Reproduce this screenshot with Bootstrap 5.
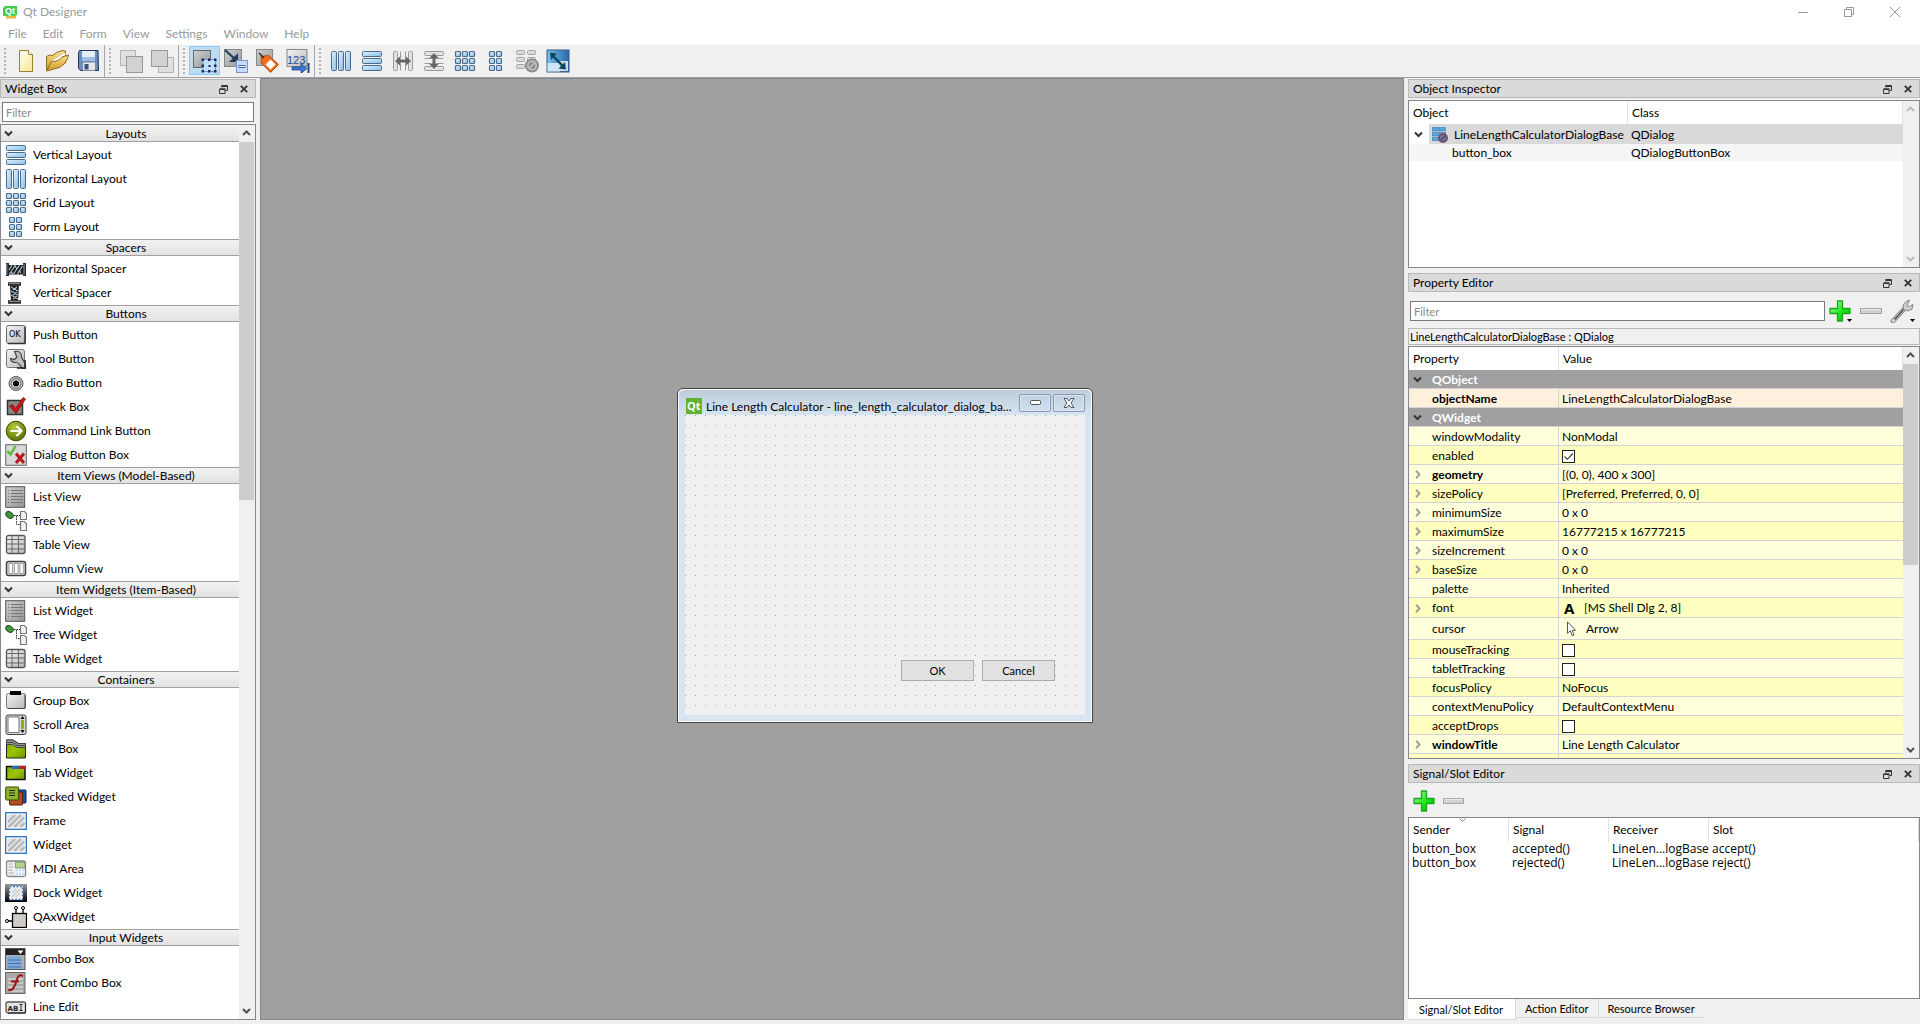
<!DOCTYPE html>
<html lang="en">
<head>
<meta charset="utf-8">
<meta name="viewport" content="width=device-width, initial-scale=1">
<title>Qt Designer</title>
<link href="https://cdn.jsdelivr.net/npm/bootstrap@5.3.0/dist/css/bootstrap.min.css" rel="stylesheet">
<style>
  :root { --ui: Lato, "Open Sans", sans-serif; --frame: #828790; --face: #f0f0f0; }
  body { font-family: var(--ui); font-size: 12px; line-height: 16px; color: #000; background: var(--face); }
  button, input { font: inherit; color: inherit; }
  button { background: none; border: 0; padding: 0; }
  svg { display: block; flex: none; }

  /* window chrome */
  .titlebar { height: 24px; padding: 0 2px 0 3px; gap: 6px; color: #999; }
  .titlebar .caption-btn { width: 46px; height: 20px; }
  .menus { height: 20px; color: #999; }
  .menus a { color: inherit; text-decoration: none; padding: 0 8px; line-height: 20px; }
  .toolrow { height: 34px; border-top: 1px solid #fafafa; border-bottom: 1px solid #a0a0a0; background: var(--face); }
  .toolgroup { padding: 1px 1px 2px 4px; border-right: 1px solid #a6a6a6; }
  .toolgroup:last-child { border-right: 0; }
  .grip { width: 3px; margin: 2px 3px 1px 0; background: radial-gradient(circle at 1px 1px, #b4b4b4 1px, transparent 1px) 0 0 / 3px 4px; }
  .tool { width: 31px; height: 29px; }
  .tool.active { background: #bcdcf4; border: 1px solid #90c8f6; }

  /* docks */
  .dock { padding-top: 1px; }
  .dock-left { width: 256px; }
  .dock-right { width: 512px; }
  .dock-title { height: 19px; background: #dadada; border: 1px solid #b8b8b8; padding: 1px 7px 0 4px; flex: none; }
  .dock-title h2 { font-size: 12px; line-height: 16px; margin: 0; font-weight: 400; }
  .view { background: #fff; border: 1px solid var(--frame); }
  .filter { height: 20px; border: 1px solid #7a7a7a; border-radius: 0; padding: 1px 3px 0; background: #fff; min-width: 0; font-size: 11px; }
  .filter::placeholder { color: #8a8a8a; opacity: 1; }
  .searchrow { padding: 4px 2px 2px; }

  /* scrollbars */
  .sbar { width: 16px; flex: none; background: var(--face); padding-right: 1px; color: #505050; }
  .sbar.idle { color: #bdbdbd; }
  .sbar .arrow { height: 17px; }
  .sbar .thumb { background: #cdcdcd; }

  /* widget box */
  .cat { height: 17px; margin-bottom: 1px; width: 100%; padding-left: 3px; background: linear-gradient(#f2f2f2, #e2e2e2);
    border-top: 1px solid #a0a0a0; border-bottom: 1px solid #a0a0a0; }
  .cat.first { border-top-color: #f2f2f2; }
  .cat span { flex: 1; text-align: center; line-height: 15px; }
  .item { height: 24px; width: 100%; padding-left: 4px; gap: 6px; text-align: left; }

  /* tables */
  table.tree { table-layout: fixed; width: 100%; border-collapse: separate; border-spacing: 0; }
  .tree th { font-weight: 400; height: 23px; padding: 0 4px; border-right: 1px solid #e2e2e2; line-height: 16px; }
  .tree td { padding: 0 3px; white-space: nowrap; line-height: 16px; }
  .obj tr.sel td { height: 20px; padding-top: 1px; background: #d9d9d9; }
  .obj tr.sel td:first-child { background: linear-gradient(90deg, #fff 20px, #d9d9d9 20px); }
  .obj tr.sub td { height: 17px; background: #f5f5f5; }
  .obj tr.sub td:first-child { padding-left: 43px; }
  .obj .obj-down { margin-left: 2px; }
  .obj .obj-icon { margin: 0 6px 0 9px; }
  .prop td { height: 19px; padding-top: 1px; border-bottom: 1px solid #d4d4d4; }
  .prop td:first-child { padding-left: 4px; border-right: 1px solid #d4d4d4; }
  .prop tr.light td { background: #ffffdc; }
  .prop tr.dark td { background: #ffffbf; }
  .prop tr.named td { background: #fff0de; }
  .prop tr.group td { background: #a0a0a0; color: #fff; font-weight: 700; border-right: 0; }
  .prop tr.tall td { height: 20px; }
  .prop tr.taller td { height: 22px; }
  .prop .glyph-a { width: 13px; margin: 0 7px 0 2px; font: 700 15px/16px "Noto Sans", sans-serif; }
  .prop .pointer { margin: 0 10px 0 5px; }
  .twisty { width: 9px; margin-right: 10px; flex: none; }
  .prop .form-check-input { width: 13px; height: 13px; margin: 1px 0 0; border: 1px solid #222; border-radius: 0; background-color: #fff; float: none; }
  .prop .form-check-input:checked { background: #fff url("data:image/svg+xml,%3Csvg xmlns='http://www.w3.org/2000/svg' viewBox='0 0 11 11'%3E%3Cpath d='M1.5 5.5l2.8 2.8L9.8 2.5' fill='none' stroke='%23333' stroke-width='1.1'/%3E%3C/svg%3E") center / 11px; }
  .path-label { height: 17px; border: 1px solid #b9b9b9; padding: 0 1px; line-height: 16px; font-size: 11px; }
  .objects { height: 168px; margin: 2px 0 5px; }
  .properties { margin: 1px 0 5px; flex-basis: 0; }
  .signals { height: 182px; font-family: "Open Sans", "Noto Sans", sans-serif; }
  .signals th { font-family: var(--ui); height: 24px; }
  .signals td { height: 14px; line-height: 14px; }
  .sigbar { height: 34px; padding: 2px 5px 0; gap: 8px; }
  .filterbar { height: 36px; padding: 2px 5px 0 2px; }
  .minus-btn { margin: 0 8px; }
  .drop { margin-left: -4px; }

  .tab { height: 19px; border-right: 1px solid #d9d9d9; border-bottom: 1px solid #d9d9d9; padding: 0 9px; line-height: 20px; font-size: 11px; }
  .tab.active { height: 21px; background: #fff; line-height: 21px; padding: 0 12px 0 11px; }

  /* form canvas */
  .mdi { background: #a0a0a0; border: 1px solid var(--frame); position: relative; min-width: 0; }
  .formwin { position: absolute; left: 416px; top: 309px; border: 1px solid #444; border-radius: 6px 6px 0 0; background: #fff; padding: 1px; }
  .formframe { background: linear-gradient(#becbd9, #d7e4f2 25px); border-radius: 5px 5px 0 0; padding: 0 6px 6px; }
  .formtitle { height: 25px; gap: 4px; padding-left: 1px; }
  .formtitle .qt-badge { margin-top: 8px; }
  .formtitle .title-text { flex: 1; white-space: nowrap; padding-top: 9px; line-height: 16px; }
  .formtitle .wbtns { gap: 2px; }
  .formtitle .wbtn { width: 32px; height: 18px; margin-top: 4px; border: 1px solid #8a98b4; border-radius: 2px; background: linear-gradient(#c3d0df, #d2dfed); box-shadow: inset 0 0 0 1px #dbe5f0; }
  .canvas { width: 400px; height: 300px; padding: 0 30px 34px; gap: 8px;
    background: conic-gradient(from 0deg at 1px 1px, transparent 270deg, #a0a0a0 0) 0 0 / 10px 10px, var(--face); }
  .pbtn { width: 73px; height: 21px; background: #e1e1e1; border: 1px solid #adadad; line-height: 19px; font-size: 11px; }
</style>
<script src="https://cdn.jsdelivr.net/npm/bootstrap@5.3.0/dist/js/bootstrap.bundle.min.js"></script>
</head>
<body class="vh-100 d-flex flex-column overflow-hidden">

<svg width="0" height="0" class="position-absolute" aria-hidden="true">
  <defs>
    <linearGradient id="gBlue" x1="0" y1="0" x2="1" y2="1"><stop offset="0" stop-color="#e2f4ff"/><stop offset="1" stop-color="#86bde6"/></linearGradient>
    <linearGradient id="gGray" x1="0" y1="0" x2="1" y2="1"><stop offset="0" stop-color="#f4f4f4"/><stop offset="1" stop-color="#b8b8b8"/></linearGradient>
    <linearGradient id="gMid" x1="0" y1="0" x2="1" y2="1"><stop offset="0" stop-color="#d0d0d0"/><stop offset="1" stop-color="#969696"/></linearGradient>
    <linearGradient id="gPage" x1="0" y1="0" x2="1" y2="1"><stop offset="0" stop-color="#fffef0"/><stop offset="1" stop-color="#f7e69a"/></linearGradient>
    <linearGradient id="gFold" x1="0" y1="0" x2="0" y2="1"><stop offset="0" stop-color="#fbe08a"/><stop offset="1" stop-color="#d09a28"/></linearGradient>
    <linearGradient id="gPlus" x1="0" y1="0" x2="1" y2="1"><stop offset="0" stop-color="#b8ffb0"/><stop offset=".55" stop-color="#18e818"/><stop offset="1" stop-color="#00b400"/></linearGradient>
    <linearGradient id="gDock" x1="0" y1="0" x2="0" y2="1"><stop offset="0" stop-color="#999"/><stop offset="1" stop-color="#000"/></linearGradient>
    <radialGradient id="gOlive" cx=".4" cy=".3" r=".7"><stop offset="0" stop-color="#b4cc38"/><stop offset="1" stop-color="#5c7400"/></radialGradient>
    <linearGradient id="gLime" x1="0" y1="0" x2="1" y2="1"><stop offset="0" stop-color="#79a800"/><stop offset=".5" stop-color="#9cc400"/><stop offset="1" stop-color="#6c9400"/></linearGradient>
    <linearGradient id="gFit" x1="0" y1="0" x2="1" y2="0"><stop offset="0" stop-color="#7cc0ec"/><stop offset="1" stop-color="#2468a8"/></linearGradient>
  </defs>
  <symbol id="down" viewBox="0 0 9 9"><path d="M1 2.500l3.500 3.500L8 2.500" fill="none" stroke="#333" stroke-width="2"/></symbol>
  <symbol id="right" viewBox="0 0 9 9"><path d="M3 .8l3.600 3.700L3 8.200" fill="none" stroke="#a2a29a" stroke-width="2"/></symbol>
  <symbol id="s-up" viewBox="0 0 9 9"><path d="M1 6l3.500-3.500L8 6" fill="none" stroke="currentColor" stroke-width="2"/></symbol>
  <symbol id="s-down" viewBox="0 0 9 9"><path d="M1 3l3.500 3.500L8 3" fill="none" stroke="currentColor" stroke-width="2"/></symbol>
  <symbol id="float" viewBox="0 0 9 9"><path d="M3 2.500V.8h5.500V5.500H6.500" fill="none" stroke="#333"/><path d="M2.500 1h6" stroke="#333" stroke-width="2"/><path d="M.5 4.500h5.500v4H.5z" fill="none" stroke="#333"/><path d="M.5 4h6" stroke="#333" stroke-width="1.500"/></symbol>
  <symbol id="close" viewBox="0 0 8 8"><path d="M.8.8l6.400 6.400M7.200.8L.8 7.200" stroke="#333" stroke-width="1.800"/></symbol>
  <symbol id="plus" viewBox="0 0 22 22"><path d="M8.500 1h5v7.500H21v5h-7.500V21h-5v-7.500H1v-5h7.500z" fill="url(#gPlus)" stroke="#1da51d" stroke-width="1.300" stroke-linejoin="round"/></symbol>
  <symbol id="minus" viewBox="0 0 22 6"><rect x=".5" y=".5" width="21" height="5" fill="#d2d2d2" stroke="#a2a2a2"/><path d="M1.500 1.500h19" stroke="#eee"/></symbol>
  <symbol id="wrench" viewBox="0 0 24 24"><path d="M3 22L15 9" stroke="#777" stroke-width="4.600" stroke-linecap="round"/><path d="M3 22L15 9" stroke="#d8d8d8" stroke-width="3" stroke-linecap="round"/><path d="M4.500 20.500L14 10" stroke="#444" stroke-width="1.400"/><path d="M19.500 1l-3.500 1.500L13 6l.5 4.500 4.500 1.500 4-2 1-4.500-3.500 2-2.500-1z" fill="#ccc" stroke="#8a8a8a"/></symbol>

  <!-- layouts -->
  <symbol id="vlay" viewBox="0 0 22 22"><g fill="url(#gBlue)" stroke="#4c6a8a"><rect x="1.500" y="1.500" width="19" height="5" rx="1"/><rect x="1.500" y="8.500" width="19" height="5" rx="1"/><rect x="1.500" y="15.500" width="19" height="5" rx="1"/></g></symbol>
  <symbol id="hlay" viewBox="0 0 22 22"><g fill="url(#gBlue)" stroke="#4c6a8a"><rect x="1.500" y="1.500" width="5" height="19" rx="1"/><rect x="8.500" y="1.500" width="5" height="19" rx="1"/><rect x="15.500" y="1.500" width="5" height="19" rx="1"/></g></symbol>
  <symbol id="grid" viewBox="0 0 22 22"><g fill="url(#gBlue)" stroke="#4c6a8a" stroke-width="1.200"><rect x="1.500" y="1.500" width="5" height="5" rx="1"/><rect x="8.500" y="1.500" width="5" height="5" rx="1"/><rect x="15.500" y="1.500" width="5" height="5" rx="1"/><rect x="1.500" y="8.500" width="5" height="5" rx="1"/><rect x="8.500" y="8.500" width="5" height="5" rx="1"/><rect x="15.500" y="8.500" width="5" height="5" rx="1"/><rect x="1.500" y="15.500" width="5" height="5" rx="1"/><rect x="8.500" y="15.500" width="5" height="5" rx="1"/><rect x="15.500" y="15.500" width="5" height="5" rx="1"/></g></symbol>
  <symbol id="form" viewBox="0 0 22 22"><g fill="url(#gBlue)" stroke="#4c6a8a" stroke-width="1.200"><rect x="4.500" y="1.500" width="5" height="5" rx="1"/><rect x="11.500" y="1.500" width="5" height="5" rx="1"/><rect x="4.500" y="8.500" width="5" height="5" rx="1"/><rect x="11.500" y="8.500" width="5" height="5" rx="1"/><rect x="4.500" y="15.500" width="5" height="5" rx="1"/><rect x="11.500" y="15.500" width="5" height="5" rx="1"/></g></symbol>
  <symbol id="hsplit" viewBox="0 0 22 22"><g fill="#e2e2e2" stroke="#9a9a9a"><rect x="1.500" y="1.500" width="4" height="19" rx="1"/><rect x="16.500" y="1.500" width="4" height="19" rx="1"/><path d="M8.500 1.500v6M13.500 1.500v6M8.500 14.500v6M13.500 14.500v6"/></g><path d="M3 11l5.500-5v3.500h5V6l5.500 5-5.500 5v-3.500h-5V16z" fill="#666"/></symbol>
  <symbol id="vsplit" viewBox="0 0 22 22"><g fill="#e2e2e2" stroke="#9a9a9a"><rect x="1.500" y="1.500" width="19" height="4" rx="1"/><rect x="1.500" y="16.500" width="19" height="4" rx="1"/><path d="M1.500 8.500h6M1.500 13.500h6M14.500 8.500h6M14.500 13.500h6"/></g><path d="M11 3l5 5.500h-3.500v5H16L11 19l-5-5.500h3.500v-5H6z" fill="#666"/></symbol>
  <symbol id="break" viewBox="0 0 24 24"><g fill="#dadada" stroke="#a4a4a4"><rect x="1.500" y="1.500" width="8" height="4" rx="1"/><rect x="12.500" y="1.500" width="8" height="4" rx="1"/><rect x="1.500" y="8.500" width="8" height="4" rx="1"/><rect x="12.500" y="8.500" width="8" height="4" rx="1"/><rect x="1.500" y="15.500" width="8" height="4" rx="1"/></g><circle cx="17" cy="16.500" r="7" fill="#8c8c8c"/><circle cx="17" cy="16.500" r="4.200" fill="none" stroke="#c4c4c4" stroke-width="1.500"/><path d="M14 19.500l6-6" stroke="#c4c4c4" stroke-width="1.500"/></symbol>
  <symbol id="breakc" viewBox="0 0 16 16"><g fill="#58a6de" stroke="#3a7aae" stroke-width=".6"><rect x="0" y=".5" width="6.500" height="3.500"/><rect x="7.500" y=".5" width="6" height="3.500"/><rect x="0" y="5.500" width="6.500" height="3.500"/><rect x="7.500" y="5.500" width="6" height="3.500"/><rect x="0" y="10.500" width="6.500" height="3"/></g><circle cx="11" cy="11" r="5" fill="#74506a"/><circle cx="11" cy="11" r="3" fill="#5c7ca8"/><path d="M8.500 13.500l5-5" stroke="#74405a" stroke-width="1.500"/></symbol>
  <symbol id="adjust" viewBox="0 0 24 24"><rect x="1" y="1" width="22" height="22" fill="url(#gFit)" stroke="#2c5c8c"/><path d="M14 12h8v10h-8z" fill="#d8d8d8"/><path d="M1.500 14H14v8.500H1.500z" fill="#d0e6f4"/><path d="M4 3.500l7 1L8.700 7l8.100 8.300 2.200-2.300 1 7.500-7.500-1 2.500-2.500-8-8.300L5 11z" fill="#0c4a64"/></symbol>

  <!-- toolbar -->
  <symbol id="new" viewBox="0 0 24 24"><path d="M5.500 1.500h9l4 4v17h-13z" fill="url(#gPage)" stroke="#97812c"/><path d="M14.500 1.500v4h4" fill="#fff" stroke="#97812c"/></symbol>
  <symbol id="open" viewBox="0 0 24 24"><path d="M1.500 21V7.500l3-1.500 3 .5 4-3 6-2 3 .5V14z" fill="url(#gFold)" stroke="#8d6a1c" stroke-linejoin="round"/><path d="M6 12L19 4l2 1-6 10z" fill="#fff" stroke="#bbb" stroke-width=".6"/><path d="M1.500 22l5-9.500c4 0 8-1 10.500-4.500l6.500-2c-1.500 6-4 9.500-9 12.500z" fill="url(#gFold)" stroke="#8d6a1c" stroke-linejoin="round"/></symbol>
  <symbol id="save" viewBox="0 0 24 24"><path d="M3.500 1.500h18.500l.5 20H4.500l-2-2v-16z" fill="#6a8cb8" stroke="#1f3460" stroke-linejoin="round"/><rect x="6" y="2" width="13" height="9.500" fill="#e2eefa"/><path d="M6 9.500h13" stroke="#9ac0e8" stroke-width="3"/><rect x="7" y="13.500" width="12" height="8" fill="#e6e6e6"/><rect x="8.500" y="15" width="4" height="5.500" fill="#36537e"/></symbol>
  <symbol id="front" viewBox="0 0 24 24"><rect x="1.500" y="1.500" width="15" height="15" fill="#e0e0e0" stroke="#b4b4b4"/><rect x="7.500" y="7.500" width="16" height="16" fill="#d2d2d2" stroke="#989898"/></symbol>
  <symbol id="back" viewBox="0 0 24 24"><rect x="8.500" y="8.500" width="15" height="15" fill="#e0e0e0" stroke="#b4b4b4"/><rect x="1.500" y="1.500" width="16" height="16" fill="#d2d2d2" stroke="#989898"/></symbol>
  <symbol id="ewid" viewBox="0 0 24 24"><rect x=".5" y="1.500" width="17" height="17" fill="url(#gMid)" stroke="#666"/><rect x="10" y="10.500" width="12.500" height="12" fill="#c4deff" stroke="#6c94d8"/><path d="M8.500 9.500h2.500v2.500H8.500zM15 9.500h2.500v2.500H15zM21 9.500h2.500v2.500H21zM8.500 15.500h2.500v2.500H8.500zM21 15.500h2.500v2.500H21zM8.500 21h2.500v2.500H8.500zM15 21h2.500v2.500H15zM21 21h2.500v2.500H21zM15.500 16h2v2h-2z" fill="#1c2c54"/></symbol>
  <symbol id="esig" viewBox="0 0 24 24"><rect x=".5" y=".5" width="17" height="17" fill="url(#gMid)" stroke="#888"/><path d="M1 1l11 10" stroke="#20405c" stroke-width="2.200"/><path d="M14 4v9H5z" fill="#20405c"/><rect x="12.500" y="11.500" width="11" height="12" fill="#c6dcff" stroke="#7c94c8"/><path d="M14.500 17.500h7" stroke="#3c64ac" stroke-width="3"/><path d="M15 17.500h6" stroke="#fff"/></symbol>
  <symbol id="ebud" viewBox="0 0 24 24"><rect x="1.500" y=".5" width="16" height="16" fill="url(#gMid)" stroke="#888"/><path d="M6 7.500l7.500-1L23.500 15.500 15.500 23.500 6.500 14z" fill="#f46c1c" stroke="#b0480c"/><path d="M15.500 10.500l5 5-5 5-5-5z" fill="#fff"/><path d="M4 4l5 5" stroke="#222" stroke-width="1.200"/></symbol>

  <!-- widgets -->
  <symbol id="hspace" viewBox="0 0 22 22"><path d="M2.500 5v13M19.500 5v13" stroke="#2a2a2a" stroke-width="3"/><path d="M1.800 6v11M19 6v11" stroke="#999"/><path d="M4 7h14v9.500H4z" fill="#1c1c1c"/><path d="M4 12l3-5M4.500 16l6-9M8.500 16l6-9M12.500 16l5-8M6 14l2 2M10 8l2 3M14 12l2 3" stroke="#a8c4d8" stroke-width="1.200"/></symbol>
  <symbol id="vspace" viewBox="0 0 22 22"><path d="M3 2h13M3 20h13" stroke="#2a2a2a" stroke-width="3.500"/><path d="M4 1.500h11M4 19.500h11" stroke="#888"/><path d="M5 3.500h9l-1 15H6z" fill="#1c1c1c"/><path d="M6 5l7 4M6 9l7 4M6 13l7 4M12 5l-4 3M12 10l-4 3M12 14l-4 3" stroke="#a8c4d8" stroke-width="1.100"/></symbol>
  <symbol id="toolb" viewBox="0 0 22 22"><rect x="1.500" y="1.500" width="18" height="18" rx="2" fill="url(#gGray)" stroke="#777"/><path d="M9.500 3.500c4-1 7 1 7 5 0 1.500 2 4 4 8v4h-3c-2-3-4-6-6-6-3 0-6-1-6-4l4 1 2.500-2.500z" fill="#c0c0c0" stroke="#444" stroke-width="1.200"/><path d="M20 12v8h-8" fill="none" stroke="#222" stroke-width="1.500"/></symbol>
  <symbol id="radio" viewBox="0 0 22 22"><circle cx="11" cy="11.500" r="7" fill="#bbb" stroke="#555"/><circle cx="11" cy="11.500" r="4.800" fill="#ddd" stroke="#666"/><circle cx="11" cy="11.500" r="3" fill="#000"/></symbol>
  <symbol id="check" viewBox="0 0 22 22"><rect x="2.500" y="4.500" width="15" height="14" fill="#888" stroke="#333" stroke-width="1.500"/><path d="M4.500 10l3-1.500 3 4L18 1.500l2.500 1.500L11 17.500z" fill="#d01414" stroke="#780808" stroke-width=".7"/></symbol>
  <symbol id="link" viewBox="0 0 22 22"><circle cx="11" cy="11" r="9.800" fill="url(#gOlive)" stroke="#3c4c00"/><path d="M5.500 11h11M11.500 6l5 5-5 5" fill="none" stroke="#fff" stroke-width="2.200"/></symbol>
  <symbol id="dbb" viewBox="0 0 22 22"><rect x=".7" y=".7" width="20.600" height="20.600" fill="#d8d8d8" stroke="#666"/><path d="M2.500 7l3 3.500L10.500 2" fill="none" stroke="#58b838" stroke-width="2.200"/><path d="M11 9.500l8 9.500M19 9.500l-8 9.500" stroke="#b81818" stroke-width="3"/></symbol>
  <symbol id="list" viewBox="0 0 22 22"><rect x=".7" y=".7" width="19" height="20.600" fill="url(#gMid)" stroke="#555"/><path d="M3 4.500h1M3 7.500h1M3 10.500h1M3 13.500h1M3 16.500h1M6 4.500h12M6 7.500h12M6 10.500h12M6 13.500h12M6 16.500h12" stroke="#777"/></symbol>
  <symbol id="treei" viewBox="0 0 22 22"><ellipse cx="4.500" cy="5" rx="4" ry="2.800" transform="rotate(35 4.500 5)" fill="#3c9c3c" stroke="#174c17"/><path d="M9 5.500h6M11.500 6v8.500H15" fill="none" stroke="#222" stroke-dasharray="1.500 1"/><path d="M15.500 1.500h4l2 2v6h-6zM15.500 11.500h4l2 2v7h-6z" fill="#f0f0f0" stroke="#777" stroke-width="1.200"/></symbol>
  <symbol id="tablei" viewBox="0 0 22 22"><rect x="1.500" y="1.500" width="18.500" height="18" rx="2" fill="url(#gGray)" stroke="#555" stroke-width="1.300"/><path d="M7 2v17M13.500 2v17M2 5.500h18M2 10h18M2 15h18" stroke="#666"/></symbol>
  <symbol id="columni" viewBox="0 0 22 22"><rect x="1.500" y="3.500" width="19" height="14" rx="2" fill="#d8d8d8" stroke="#444" stroke-width="1.500"/><path d="M4 5.500h3.500v10H4zM9.500 5.500H13v10H9.500zM15 5.500h3.500v10H15z" fill="#fff" stroke="#888" stroke-width=".7"/></symbol>
  <symbol id="group" viewBox="0 0 22 22"><rect x="1.500" y="3.500" width="19" height="15" rx="2" fill="url(#gGray)" stroke="#777"/><path d="M20 5v13.500H3" fill="none" stroke="#444"/><path d="M5 1h11v4H5z" fill="#000"/></symbol>
  <symbol id="scroll" viewBox="0 0 22 22"><rect x="1" y="1" width="20" height="19.500" rx="2" fill="#d8d8d8" stroke="#444"/><rect x="3" y="3" width="11" height="15.500" fill="#fff" stroke="#777"/><path d="M16 6h3v9h-3z" fill="#88b418"/><path d="M15.500 5l2-3 2 3zM15.500 16l2 3 2-3z" fill="#000"/></symbol>
  <symbol id="toolbox" viewBox="0 0 22 22"><path d="M1.500 2v18h19V5.500h-7L8 2z" fill="url(#gLime)" stroke="#222"/><path d="M1.500 2H8l5 3.500h7.500v4H12L7.500 6.500h-6z" fill="#999" stroke="#444"/><path d="M1.500 4.500H8l4.500 3h8" fill="none" stroke="#444"/></symbol>
  <symbol id="tabw" viewBox="0 0 22 22"><rect x="1.500" y="4.500" width="18.500" height="13" fill="url(#gLime)" stroke="#111" stroke-width="1.500"/><path d="M7 4h7v3H7z" fill="#2c68b4"/><path d="M14 4h6v3h-6z" fill="#c82020"/></symbol>
  <symbol id="stacked" viewBox="0 0 22 22"><rect x="8" y="4" width="13" height="13" rx="1" fill="#1c50b0" stroke="#0c2450"/><rect x="4.500" y="6" width="13" height="13" rx="1" fill="#b84c1c" stroke="#50200c"/><rect x=".7" y="1" width="13" height="13" rx="1" fill="#90b428" stroke="#334400"/><path d="M4 4.500h6M4 7h6M4 9.500h6" stroke="#222"/></symbol>
  <symbol id="frame" viewBox="0 0 22 22"><rect x=".7" y="2.700" width="20.600" height="16.600" fill="#fff" stroke="#2c70c0" stroke-width="1.300"/><rect x="2.500" y="4.500" width="17" height="13" fill="#e4e4e4"/><path d="M3 12l7-7M3.500 17L16 4.800M9.500 17l9.500-9.500M15.500 17l4-4" stroke="#b8b8b8" stroke-width="2.400"/></symbol>
  <symbol id="mdii" viewBox="0 0 22 22"><rect x="1.500" y="3" width="19" height="15.500" rx="2" fill="#eee" stroke="#888" stroke-width="1.300"/><path d="M10.500 4H20v6h-9.500z" fill="#b0d488" stroke="#777" stroke-width=".7"/><path d="M11 11h9v7h-9z" fill="#c4dcf4"/><path d="M3.500 6h4M3.500 9h5M3.500 12h4M3.500 15h5" stroke="#b0b0b0"/><path d="M13.500 11v7M16.500 11v7M11 14h9" stroke="#fff"/></symbol>
  <symbol id="docki" viewBox="0 0 22 22"><rect y="2" width="22" height="18" fill="url(#gDock)"/><rect x="4.500" y="4.500" width="13" height="13" fill="#eee" stroke="#fff"/><rect x="4.500" y="4.500" width="13" height="13" fill="none" stroke="#3c78c4" stroke-width="1.300" stroke-dasharray="2 1.500"/><path d="M7 15l8-8M7 11l4-4M11 15l4-4" stroke="#ccc" stroke-width="1.500"/></symbol>
  <symbol id="qax" viewBox="0 0 22 22"><rect x="7.500" y="7.500" width="14" height="14" fill="#d0ccc8" stroke="#000" stroke-width="1.300"/><path d="M11 7V3M18 7V3M7 15H3" stroke="#000" stroke-width="1.300"/><circle cx="11" cy="2" r="1.500" fill="#fff" stroke="#000"/><circle cx="18" cy="2" r="1.500" fill="#fff" stroke="#000"/><circle cx="2" cy="15" r="1.500" fill="#fff" stroke="#000"/></symbol>
  <symbol id="combo" viewBox="0 0 22 22"><rect x=".5" y=".5" width="19.500" height="21" fill="#b0b0b0" stroke="#555"/><path d="M1 1h19v6H1z" fill="#222"/><path d="M12.500 2.500h6l-3 3.500z" fill="#fff"/><path d="M2.500 8.500h14v12.500h-14z" fill="#7ca8dc"/><path d="M2.500 12h14M2.500 15.500h14M2.500 19h14" stroke="#4c74a8"/></symbol>
  <symbol id="fcombo" viewBox="0 0 22 22"><rect x=".5" y=".5" width="19.500" height="21" fill="#a8a8a8" stroke="#666"/><path d="M3 7h15M3 11h15M3 15h15M3 19h15" stroke="#c8c8c8" stroke-width="2"/><path d="M18 4c-6-3-6 5-8 9s-3 6-7 5M6 9.500h8" fill="none" stroke="#a01414" stroke-width="2"/></symbol>
</svg>

<header class="bg-white flex-shrink-0">
  <div class="titlebar d-flex align-items-center">
    <svg width="14" height="14" viewBox="0 0 14 14"><path d="M2 1h12v9l-2 1H0V3z" fill="#41cd52"/><text x="2" y="9" font-family="Liberation Sans, sans-serif" font-weight="700" font-size="9" fill="#fff">Qt</text><path d="M3 11h10v2.500H3z" fill="#e8b838"/></svg>
    <span>Qt Designer</span>
    <div class="ms-auto d-flex">
      <button class="caption-btn d-flex align-items-center justify-content-center" aria-label="Minimize"><svg width="10" height="10" viewBox="0 0 10 10"><path d="M0 5.500h10" stroke="#999"/></svg></button>
      <button class="caption-btn d-flex align-items-center justify-content-center" aria-label="Restore"><svg width="10" height="10" viewBox="0 0 10 10"><path d="M.5 2.500h7v7h-7zM2.500 2.500v-2h7v7h-2" fill="none" stroke="#999"/></svg></button>
      <button class="caption-btn d-flex align-items-center justify-content-center" aria-label="Close"><svg width="10" height="10" viewBox="0 0 10 10"><path d="M0 0l10 10M10 0L0 10" stroke="#999"/></svg></button>
    </div>
  </div>
  <nav class="menus d-flex" aria-label="Main menu">
    <a href="#">File</a><a href="#">Edit</a><a href="#">Form</a><a href="#">View</a><a href="#">Settings</a><a href="#">Window</a><a href="#">Help</a>
  </nav>
  <div class="toolrow d-flex" role="toolbar" aria-label="Tools">
    <div class="toolgroup d-flex"><i class="grip"></i>
      <button class="tool d-flex align-items-center justify-content-center" aria-label="New"><svg width="24" height="24"><use href="#new"/></svg></button>
      <button class="tool d-flex align-items-center justify-content-center" aria-label="Open"><svg width="24" height="24"><use href="#open"/></svg></button>
      <button class="tool d-flex align-items-center justify-content-center" aria-label="Save"><svg width="24" height="24"><use href="#save"/></svg></button>
    </div>
    <div class="toolgroup d-flex"><i class="grip"></i>
      <button class="tool d-flex align-items-center justify-content-center" aria-label="Bring to front"><svg width="24" height="24"><use href="#front"/></svg></button>
      <button class="tool d-flex align-items-center justify-content-center" aria-label="Send to back"><svg width="24" height="24"><use href="#back"/></svg></button>
    </div>
    <div class="toolgroup d-flex"><i class="grip"></i>
      <button class="tool active d-flex align-items-center justify-content-center" aria-label="Edit widgets"><svg width="24" height="24"><use href="#ewid"/></svg></button>
      <button class="tool d-flex align-items-center justify-content-center" aria-label="Edit signals"><svg width="24" height="24"><use href="#esig"/></svg></button>
      <button class="tool d-flex align-items-center justify-content-center" aria-label="Edit buddies"><svg width="24" height="24"><use href="#ebud"/></svg></button>
      <button class="tool d-flex align-items-center justify-content-center" aria-label="Edit tab order"><svg width="24" height="24" viewBox="0 0 24 24"><rect x="1" y=".5" width="20" height="17" fill="url(#gGray)" stroke="#888"/><text x="1" y="15" font-family="Liberation Sans, sans-serif" font-size="11" fill="#1c4c98">123</text><path d="M6 18h9v-3.500l6 5-6 5V21H6z" fill="#3c78d0" stroke="#1c4488" stroke-width=".8"/><path d="M22.500 14v10" stroke="#1c4488" stroke-width="2"/></svg></button>
    </div>
    <div class="toolgroup d-flex"><i class="grip"></i>
      <button class="tool d-flex align-items-center justify-content-center" aria-label="Lay out horizontally"><svg width="22" height="22"><use href="#hlay"/></svg></button>
      <button class="tool d-flex align-items-center justify-content-center" aria-label="Lay out vertically"><svg width="22" height="22"><use href="#vlay"/></svg></button>
      <button class="tool d-flex align-items-center justify-content-center" aria-label="Horizontal splitter"><svg width="22" height="22"><use href="#hsplit"/></svg></button>
      <button class="tool d-flex align-items-center justify-content-center" aria-label="Vertical splitter"><svg width="22" height="22"><use href="#vsplit"/></svg></button>
      <button class="tool d-flex align-items-center justify-content-center" aria-label="Grid"><svg width="22" height="22"><use href="#grid"/></svg></button>
      <button class="tool d-flex align-items-center justify-content-center" aria-label="Form layout"><svg width="22" height="22"><use href="#form"/></svg></button>
      <button class="tool d-flex align-items-center justify-content-center" aria-label="Break layout"><svg width="24" height="24"><use href="#break"/></svg></button>
      <button class="tool d-flex align-items-center justify-content-center" aria-label="Adjust size"><svg width="24" height="24"><use href="#adjust"/></svg></button>
    </div>
  </div>
</header>

<main class="d-flex flex-fill gap-1 pb-1 overflow-hidden">

  <section class="dock dock-left d-flex flex-column flex-shrink-0">
    <div class="dock-title d-flex align-items-center"><h2>Widget Box</h2>
      <button class="ms-auto" aria-label="Float"><svg width="9" height="9"><use href="#float"/></svg></button>
      <button class="ms-2 ps-1" aria-label="Close dock"><svg width="8" height="8"><use href="#close"/></svg></button></div>
    <div class="searchrow d-flex"><input class="filter flex-fill" placeholder="Filter" aria-label="Filter widgets"></div>
    <div class="view d-flex flex-fill overflow-hidden">
      <div class="flex-fill overflow-hidden">
        <button class="cat first d-flex align-items-center"><svg width="9" height="9"><use href="#down"/></svg><span>Layouts</span></button>
        <button class="item d-flex align-items-center"><svg width="22" height="22"><use href="#vlay"/></svg>Vertical Layout</button>
        <button class="item d-flex align-items-center"><svg width="22" height="22"><use href="#hlay"/></svg>Horizontal Layout</button>
        <button class="item d-flex align-items-center"><svg width="22" height="22"><use href="#grid"/></svg>Grid Layout</button>
        <button class="item d-flex align-items-center"><svg width="22" height="22"><use href="#form"/></svg>Form Layout</button>
        <button class="cat d-flex align-items-center"><svg width="9" height="9"><use href="#down"/></svg><span>Spacers</span></button>
        <button class="item d-flex align-items-center"><svg width="22" height="22"><use href="#hspace"/></svg>Horizontal Spacer</button>
        <button class="item d-flex align-items-center"><svg width="22" height="22"><use href="#vspace"/></svg>Vertical Spacer</button>
        <button class="cat d-flex align-items-center"><svg width="9" height="9"><use href="#down"/></svg><span>Buttons</span></button>
        <button class="item d-flex align-items-center"><svg width="22" height="22" viewBox="0 0 22 22"><rect x="1.500" y="1.500" width="19" height="18" rx="2" fill="url(#gGray)" stroke="#6c6c6c"/><path d="M20 3v16.500H3" fill="none" stroke="#333" stroke-width="1.500"/><text x="4" y="13" font-family="DejaVu Sans, sans-serif" font-size="8" fill="#000">OK</text></svg>Push Button</button>
        <button class="item d-flex align-items-center"><svg width="22" height="22"><use href="#toolb"/></svg>Tool Button</button>
        <button class="item d-flex align-items-center"><svg width="22" height="22"><use href="#radio"/></svg>Radio Button</button>
        <button class="item d-flex align-items-center"><svg width="22" height="22"><use href="#check"/></svg>Check Box</button>
        <button class="item d-flex align-items-center"><svg width="22" height="22"><use href="#link"/></svg>Command Link Button</button>
        <button class="item d-flex align-items-center"><svg width="22" height="22"><use href="#dbb"/></svg>Dialog Button Box</button>
        <button class="cat d-flex align-items-center"><svg width="9" height="9"><use href="#down"/></svg><span>Item Views (Model-Based)</span></button>
        <button class="item d-flex align-items-center"><svg width="22" height="22"><use href="#list"/></svg>List View</button>
        <button class="item d-flex align-items-center"><svg width="22" height="22"><use href="#treei"/></svg>Tree View</button>
        <button class="item d-flex align-items-center"><svg width="22" height="22"><use href="#tablei"/></svg>Table View</button>
        <button class="item d-flex align-items-center"><svg width="22" height="22"><use href="#columni"/></svg>Column View</button>
        <button class="cat d-flex align-items-center"><svg width="9" height="9"><use href="#down"/></svg><span>Item Widgets (Item-Based)</span></button>
        <button class="item d-flex align-items-center"><svg width="22" height="22"><use href="#list"/></svg>List Widget</button>
        <button class="item d-flex align-items-center"><svg width="22" height="22"><use href="#treei"/></svg>Tree Widget</button>
        <button class="item d-flex align-items-center"><svg width="22" height="22"><use href="#tablei"/></svg>Table Widget</button>
        <button class="cat d-flex align-items-center"><svg width="9" height="9"><use href="#down"/></svg><span>Containers</span></button>
        <button class="item d-flex align-items-center"><svg width="22" height="22"><use href="#group"/></svg>Group Box</button>
        <button class="item d-flex align-items-center"><svg width="22" height="22"><use href="#scroll"/></svg>Scroll Area</button>
        <button class="item d-flex align-items-center"><svg width="22" height="22"><use href="#toolbox"/></svg>Tool Box</button>
        <button class="item d-flex align-items-center"><svg width="22" height="22"><use href="#tabw"/></svg>Tab Widget</button>
        <button class="item d-flex align-items-center"><svg width="22" height="22"><use href="#stacked"/></svg>Stacked Widget</button>
        <button class="item d-flex align-items-center"><svg width="22" height="22"><use href="#frame"/></svg>Frame</button>
        <button class="item d-flex align-items-center"><svg width="22" height="22"><use href="#frame"/></svg>Widget</button>
        <button class="item d-flex align-items-center"><svg width="22" height="22"><use href="#mdii"/></svg>MDI Area</button>
        <button class="item d-flex align-items-center"><svg width="22" height="22"><use href="#docki"/></svg>Dock Widget</button>
        <button class="item d-flex align-items-center"><svg width="22" height="22"><use href="#qax"/></svg>QAxWidget</button>
        <button class="cat d-flex align-items-center"><svg width="9" height="9"><use href="#down"/></svg><span>Input Widgets</span></button>
        <button class="item d-flex align-items-center"><svg width="22" height="22"><use href="#combo"/></svg>Combo Box</button>
        <button class="item d-flex align-items-center"><svg width="22" height="22"><use href="#fcombo"/></svg>Font Combo Box</button>
        <button class="item d-flex align-items-center"><svg width="22" height="22" viewBox="0 0 22 22"><rect x="1" y="6" width="19.500" height="11" rx="2" fill="#e4e4e4" stroke="#555" stroke-width="1.300"/><path d="M20.500 7.500V17H3" fill="none" stroke="#222"/><text x="2.500" y="14.500" font-family="DejaVu Sans, sans-serif" font-size="7" font-weight="700" fill="#222">AB</text><path d="M14.500 8.500h3M16 8.500v6M14.500 14.500h3" stroke="#222"/></svg>Line Edit</button>
      </div>
      <div class="sbar d-flex flex-column">
        <div class="arrow d-flex align-items-center justify-content-center"><svg width="9" height="9"><use href="#s-up"/></svg></div>
        <div class="thumb" style="height:40%"></div>
        <div class="arrow mt-auto d-flex align-items-center justify-content-center"><svg width="9" height="9"><use href="#s-down"/></svg></div>
      </div>
    </div>
  </section>

  <section class="mdi flex-fill">
    <div class="formwin">
      <div class="formframe">
        <div class="formtitle d-flex">
          <svg class="qt-badge" width="16" height="16" viewBox="0 0 16 16"><rect width="16" height="16" fill="#62b132"/><text x="1" y="12" font-family="Open Sans, sans-serif" font-weight="700" font-size="11" fill="#fff">Qt</text></svg>
          <span class="title-text">Line Length Calculator - line_length_calculator_dialog_ba...</span>
          <div class="wbtns d-flex">
            <button class="wbtn d-flex align-items-center justify-content-center" aria-label="Minimize form"><svg width="11" height="6" viewBox="0 0 11 6"><rect x=".5" y=".5" width="10" height="4" rx="1" fill="#fff" stroke="#4c5468"/></svg></button>
            <button class="wbtn d-flex align-items-center justify-content-center" aria-label="Close form"><svg width="12" height="10" viewBox="0 0 12 10"><path d="M1 .5h3L6 3 8 .5h3L8 5l3 4.500H8L6 7 4 9.500H1L4 5z" fill="#fff" stroke="#4c5468"/></svg></button>
          </div>
        </div>
        <div class="canvas d-flex justify-content-end align-items-end">
          <button class="pbtn">OK</button><button class="pbtn">Cancel</button>
        </div>
      </div>
    </div>
  </section>

  <aside class="dock dock-right d-flex flex-column flex-shrink-0">
    <div class="dock-title d-flex align-items-center"><h2>Object Inspector</h2>
      <button class="ms-auto" aria-label="Float"><svg width="9" height="9"><use href="#float"/></svg></button>
      <button class="ms-2 ps-1" aria-label="Close dock"><svg width="8" height="8"><use href="#close"/></svg></button></div>
    <div class="view objects d-flex flex-shrink-0">
      <div class="flex-fill">
        <table class="tree obj">
          <colgroup><col style="width:219px"><col></colgroup>
          <thead><tr><th>Object</th><th>Class</th></tr></thead>
          <tbody>
            <tr class="sel"><td><div class="d-flex align-items-center"><svg class="obj-down" width="9" height="9"><use href="#down"/></svg><svg class="obj-icon" width="16" height="16"><use href="#breakc"/></svg>LineLengthCalculatorDialogBase</div></td><td>QDialog</td></tr>
            <tr class="sub"><td>button_box</td><td>QDialogButtonBox</td></tr>
          </tbody>
        </table>
      </div>
      <div class="sbar idle d-flex flex-column">
        <div class="arrow d-flex align-items-center justify-content-center"><svg width="9" height="9"><use href="#s-up"/></svg></div>
        <div class="arrow mt-auto d-flex align-items-center justify-content-center"><svg width="9" height="9"><use href="#s-down"/></svg></div>
      </div>
    </div>

    <div class="dock-title d-flex align-items-center"><h2>Property Editor</h2>
      <button class="ms-auto" aria-label="Float"><svg width="9" height="9"><use href="#float"/></svg></button>
      <button class="ms-2 ps-1" aria-label="Close dock"><svg width="8" height="8"><use href="#close"/></svg></button></div>
    <div class="filterbar d-flex align-items-center flex-shrink-0">
      <input class="filter flex-fill" placeholder="Filter" aria-label="Filter properties">
      <button class="d-flex align-items-end ms-1" aria-label="Add property"><svg width="22" height="22"><use href="#plus"/></svg><svg class="drop" width="5" height="3" viewBox="0 0 5 3"><path d="M0 0h5L2.500 3z"/></svg></button>
      <button class="minus-btn" aria-label="Remove property"><svg width="22" height="6"><use href="#minus"/></svg></button>
      <button class="d-flex align-items-end" aria-label="Configure"><svg width="24" height="24"><use href="#wrench"/></svg><svg class="drop" width="5" height="4" viewBox="0 0 5 4"><path d="M0 0h5L2.500 3z"/></svg></button>
    </div>
    <div class="path-label flex-shrink-0">LineLengthCalculatorDialogBase : QDialog</div>
    <div class="view properties d-flex overflow-hidden flex-fill">
      <div class="flex-fill overflow-hidden">
        <table class="tree prop">
          <colgroup><col style="width:150px"><col></colgroup>
          <thead><tr><th>Property</th><th>Value</th></tr></thead>
          <tbody>
            <tr class="group"><td colspan="2"><div class="d-flex align-items-center"><svg class="twisty" height="9"><use href="#down"/></svg>QObject</div></td></tr>
            <tr class="named"><td><div class="d-flex align-items-center fw-bold"><i class="twisty"></i>objectName</div></td><td>LineLengthCalculatorDialogBase</td></tr>
            <tr class="group"><td colspan="2"><div class="d-flex align-items-center"><svg class="twisty" height="9"><use href="#down"/></svg>QWidget</div></td></tr>
            <tr class="light"><td><div class="d-flex align-items-center"><i class="twisty"></i>windowModality</div></td><td>NonModal</td></tr>
            <tr class="dark"><td><div class="d-flex align-items-center"><i class="twisty"></i><label for="p1">enabled</label></div></td><td><input class="form-check-input d-block" type="checkbox" id="p1" checked></td></tr>
            <tr class="light"><td><div class="d-flex align-items-center fw-bold"><svg class="twisty" height="9"><use href="#right"/></svg>geometry</div></td><td>[(0, 0), 400 x 300]</td></tr>
            <tr class="dark"><td><div class="d-flex align-items-center"><svg class="twisty" height="9"><use href="#right"/></svg>sizePolicy</div></td><td>[Preferred, Preferred, 0, 0]</td></tr>
            <tr class="light"><td><div class="d-flex align-items-center"><svg class="twisty" height="9"><use href="#right"/></svg>minimumSize</div></td><td>0 x 0</td></tr>
            <tr class="dark"><td><div class="d-flex align-items-center"><svg class="twisty" height="9"><use href="#right"/></svg>maximumSize</div></td><td>16777215 x 16777215</td></tr>
            <tr class="light"><td><div class="d-flex align-items-center"><svg class="twisty" height="9"><use href="#right"/></svg>sizeIncrement</div></td><td>0 x 0</td></tr>
            <tr class="dark"><td><div class="d-flex align-items-center"><svg class="twisty" height="9"><use href="#right"/></svg>baseSize</div></td><td>0 x 0</td></tr>
            <tr class="light"><td><div class="d-flex align-items-center"><i class="twisty"></i>palette</div></td><td>Inherited</td></tr>
            <tr class="dark tall"><td><div class="d-flex align-items-center"><svg class="twisty" height="9"><use href="#right"/></svg>font</div></td><td><div class="d-flex align-items-center"><span class="glyph-a">A</span>[MS Shell Dlg 2, 8]</div></td></tr>
            <tr class="light taller"><td><div class="d-flex align-items-center"><i class="twisty"></i>cursor</div></td><td><div class="d-flex align-items-center"><svg class="pointer" width="9" height="16" viewBox="0 0 9 16"><path d="M.5.8v11.500L3.300 9.800l2 5 1.800-.8-2-4.700h3.400z" fill="#fff" stroke="#444" stroke-width=".9"/></svg>Arrow</div></td></tr>
            <tr class="dark"><td><div class="d-flex align-items-center"><i class="twisty"></i><label for="p2">mouseTracking</label></div></td><td><input class="form-check-input d-block" type="checkbox" id="p2"></td></tr>
            <tr class="light"><td><div class="d-flex align-items-center"><i class="twisty"></i><label for="p3">tabletTracking</label></div></td><td><input class="form-check-input d-block" type="checkbox" id="p3"></td></tr>
            <tr class="dark"><td><div class="d-flex align-items-center"><i class="twisty"></i>focusPolicy</div></td><td>NoFocus</td></tr>
            <tr class="light"><td><div class="d-flex align-items-center"><i class="twisty"></i>contextMenuPolicy</div></td><td>DefaultContextMenu</td></tr>
            <tr class="dark"><td><div class="d-flex align-items-center"><i class="twisty"></i><label for="p4">acceptDrops</label></div></td><td><input class="form-check-input d-block" type="checkbox" id="p4"></td></tr>
            <tr class="light"><td><div class="d-flex align-items-center fw-bold"><svg class="twisty" height="9"><use href="#right"/></svg>windowTitle</div></td><td>Line Length Calculator</td></tr>
            <tr class="dark"><td></td><td></td></tr>
          </tbody>
        </table>
      </div>
      <div class="sbar d-flex flex-column">
        <div class="arrow d-flex align-items-center justify-content-center"><svg width="9" height="9"><use href="#s-up"/></svg></div>
        <div class="thumb" style="height:49%"></div>
        <div class="arrow mt-auto d-flex align-items-center justify-content-center"><svg width="9" height="9"><use href="#s-down"/></svg></div>
      </div>
    </div>

    <div class="dock-title d-flex align-items-center"><h2>Signal/Slot Editor</h2>
      <button class="ms-auto" aria-label="Float"><svg width="9" height="9"><use href="#float"/></svg></button>
      <button class="ms-2 ps-1" aria-label="Close dock"><svg width="8" height="8"><use href="#close"/></svg></button></div>
    <div class="sigbar d-flex align-items-center flex-shrink-0">
      <button aria-label="Add connection"><svg width="22" height="22"><use href="#plus"/></svg></button>
      <button aria-label="Remove connection"><svg width="21" height="6"><use href="#minus"/></svg></button>
    </div>
    <div class="view signals flex-shrink-0">
      <table class="tree">
        <colgroup><col style="width:100px"><col style="width:100px"><col style="width:100px"><col></colgroup>
        <thead><tr><th class="position-relative">Sender<svg class="position-absolute top-0 start-50" width="7" height="5" viewBox="0 0 7 5"><path d="M.5.5l3 3 3-3" fill="none" stroke="#888"/></svg></th><th>Signal</th><th>Receiver</th><th>Slot</th></tr></thead>
        <tbody>
          <tr><td>button_box</td><td>accepted()</td><td>LineLen...logBase</td><td>accept()</td></tr>
          <tr><td>button_box</td><td>rejected()</td><td>LineLen...logBase</td><td>reject()</td></tr>
        </tbody>
      </table>
    </div>
    <div class="d-flex flex-shrink-0" role="tablist">
      <button class="tab active" role="tab">Signal/Slot Editor</button>
      <button class="tab" role="tab">Action Editor</button>
      <button class="tab border-end-0" role="tab">Resource Browser</button>
    </div>
  </aside>
</main>
</body>
</html>
